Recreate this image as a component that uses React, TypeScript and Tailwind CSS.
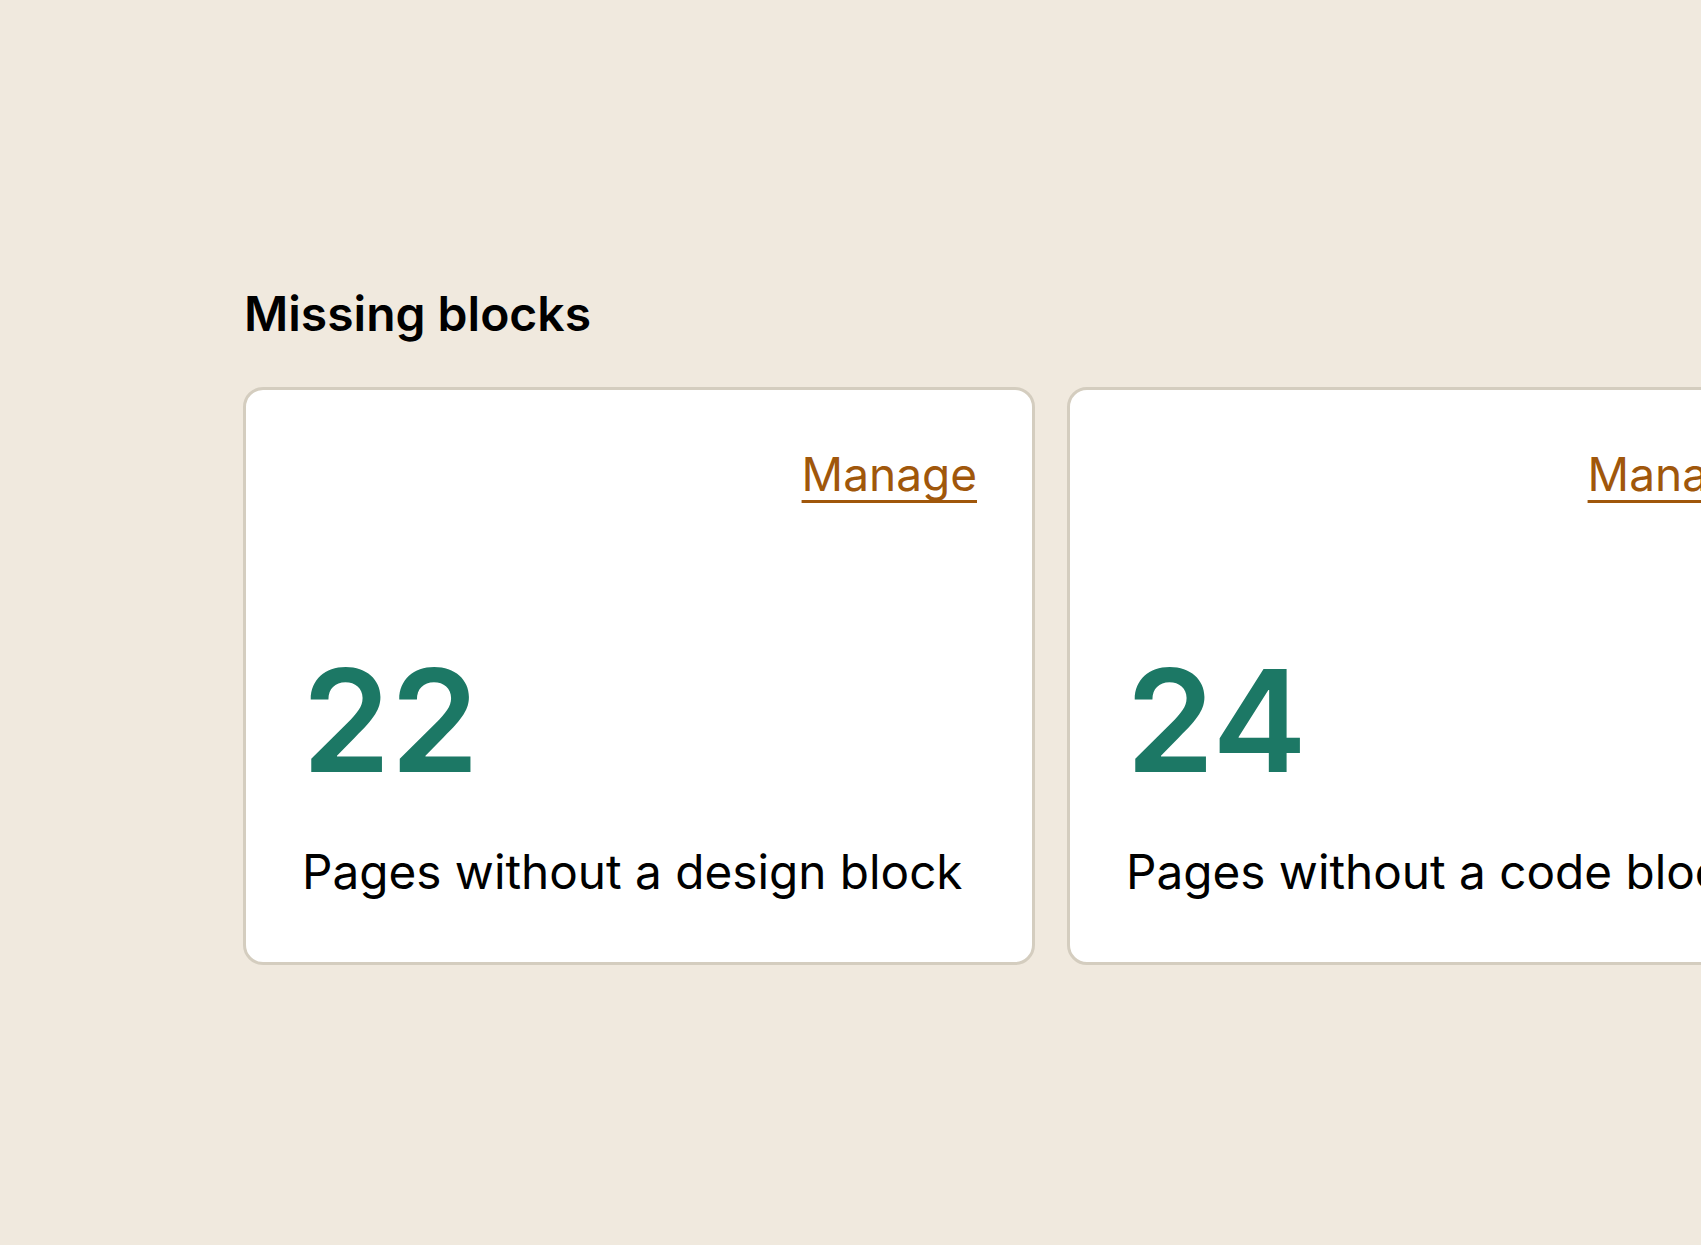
const cards = [
  { count: 22, label: 'Pages without a design block', width: 'w-[792px]' },
  { count: 24, label: 'Pages without a code block', width: 'w-[754px]' },
];

function StatCard({ count, label, width }: { count: number; label: string; width: string }) {
  return (
    <div
      className={`flex ${width} shrink-0 flex-col rounded-[20px] border-[3px] border-[#d4cdbf] bg-white pt-[57px] pr-[55px] pb-[61px] pl-[56px]`}
    >
      <a
        href="#"
        className="self-end text-[46px] leading-[1.2] text-[#a0570b] underline decoration-[3px] underline-offset-[9px] [text-decoration-skip-ink:none]"
      >
        Manage
      </a>
      <div className="mt-[147px] text-[142px] font-semibold leading-none text-[#1c7865]">{count}</div>
      <p className="mt-[53px] whitespace-nowrap text-[47.7px] leading-[1.2] text-black">{label}</p>
    </div>
  );
}

export default function App() {
  return (
    <div className="h-[1245px] w-full overflow-hidden bg-[#f0e9de] font-['Inter',sans-serif]">
      <div className="pl-[243px] pt-[285px]">
        <h2 className="pl-[1px] text-[48px] font-semibold leading-[1.2] text-black">Missing blocks</h2>
        <div className="mt-[44px] flex w-max gap-[32px]">
          {cards.map((c) => (
            <StatCard key={c.count} count={c.count} label={c.label} width={c.width} />
          ))}
        </div>
      </div>
    </div>
  );
}
